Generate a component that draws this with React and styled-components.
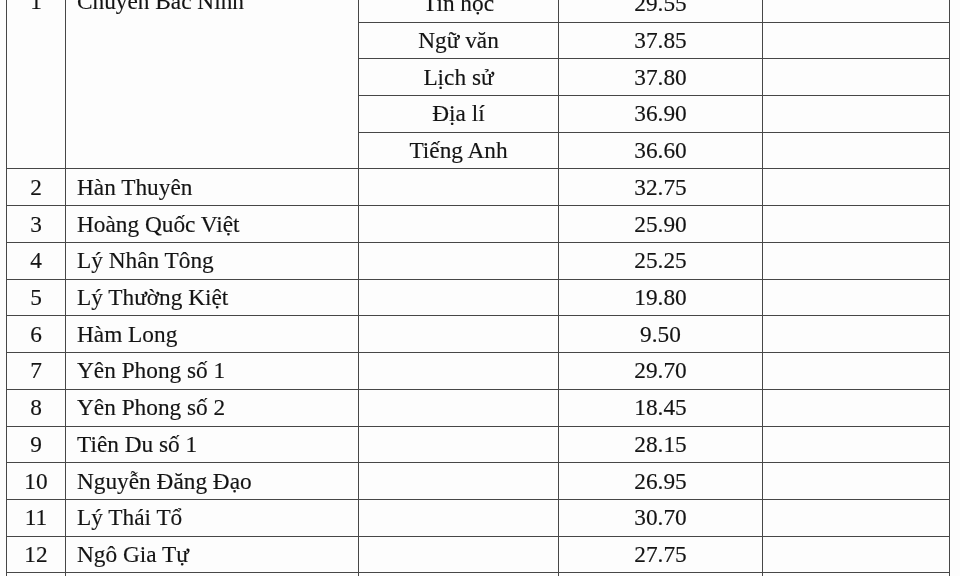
import React from "react";
import styled, { createGlobalStyle } from "styled-components";

const Global = createGlobalStyle`
  html, body { margin: 0; padding: 0; background: #fff; }
  body { font-family: "Liberation Serif", "Times New Roman", serif; }
`;

const Page = styled.div`
  width: 960px;
  height: 576px;
  overflow: hidden;
  background: #fdfdfd;
  filter: blur(0.3px);
`;

const Sheet = styled.div`
  margin-top: -162px;
  margin-left: 6px;
  width: 943px;
  display: grid;
  grid-template-columns: 59px 293px 200px 204px 187px;
  grid-auto-rows: 36.73px;
  border-top: 1.6px solid #474747;
  border-left: 1.6px solid #474747;
  color: #141414;
  font-size: 23.3px;
  -webkit-text-stroke: 0.15px #141414;
`;

const Cell = styled.div`
  box-sizing: border-box;
  border-right: 1.6px solid #474747;
  border-bottom: 1.6px solid #474747;
  display: flex;
  align-items: center;
  justify-content: ${(p) => (p.$left ? "flex-start" : "center")};
  padding-left: ${(p) => (p.$left ? "11px" : "0")};
  padding-bottom: ${(p) => (p.$lift ? "4px" : "0")};
  grid-row: ${(p) => (p.$span ? `span ${p.$span}` : "auto")};
  white-space: nowrap;
  overflow: hidden;
`;

const subjects = [
  ["Toán", ""],
  ["Vật lí", ""],
  ["Hóa học", ""],
  ["Sinh học", ""],
  ["Tin học", "29.55"],
  ["Ngữ văn", "37.85"],
  ["Lịch sử", "37.80"],
  ["Địa lí", "36.90"],
  ["Tiếng Anh", "36.60"],
];

const schools = [
  ["2", "Hàn Thuyên", "32.75"],
  ["3", "Hoàng Quốc Việt", "25.90"],
  ["4", "Lý Nhân Tông", "25.25"],
  ["5", "Lý Thường Kiệt", "19.80"],
  ["6", "Hàm Long", "9.50"],
  ["7", "Yên Phong số 1", "29.70"],
  ["8", "Yên Phong số 2", "18.45"],
  ["9", "Tiên Du số 1", "28.15"],
  ["10", "Nguyễn Đăng Đạo", "26.95"],
  ["11", "Lý Thái Tổ", "30.70"],
  ["12", "Ngô Gia Tự", "27.75"],
  ["", "", ""],
];

export default function App() {
  return (
    <>
      <Global />
      <Page>
        <Sheet>
          {subjects.map(([sub, score], i) => (
            <React.Fragment key={sub}>
              {i === 0 && (
                <>
                  <Cell $span={subjects.length} $lift>1</Cell>
                  <Cell $span={subjects.length} $left $lift>
                    Chuyên Bắc Ninh
                  </Cell>
                </>
              )}
              <Cell>{sub}</Cell>
              <Cell>{score}</Cell>
              <Cell />
            </React.Fragment>
          ))}
          {schools.map(([no, name, score], i) => (
            <React.Fragment key={i}>
              <Cell>{no}</Cell>
              <Cell $left>{name}</Cell>
              <Cell />
              <Cell>{score}</Cell>
              <Cell />
            </React.Fragment>
          ))}
        </Sheet>
      </Page>
    </>
  );
}
